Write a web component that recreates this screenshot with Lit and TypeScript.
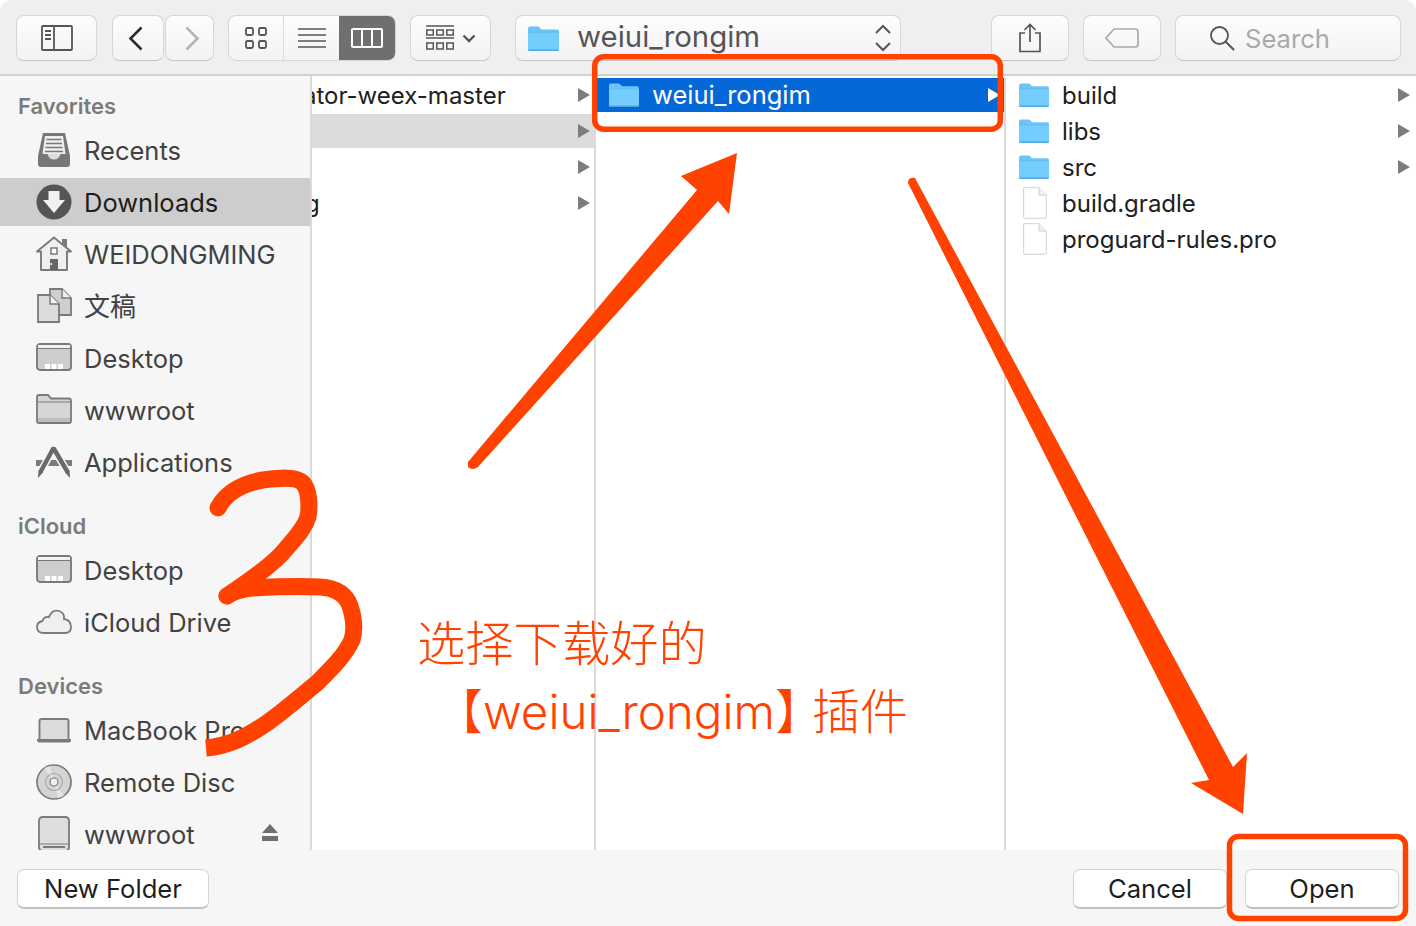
import { LitElement, html, css, svg } from "lit";
import { customElement } from "lit/decorators.js";

const folder = (cls = "") => html`<svg class="folder ${cls}" viewBox="0 0 30 24" width="30" height="24">
  <path d="M0 2.5Q0 .5 2 .5H9.5Q11 .5 12 2L13 3.2H28Q30 3.2 30 5V22Q30 24 28 24H2Q0 24 0 22Z" fill="#6cc5f8"/>
  <path d="M0 6.2H30V22Q30 24 28 24H2Q0 24 0 22Z" fill="#74cdfd"/>
  <path d="M0 22.6H30V22.8Q30 24 28 24H2Q0 24 0 22.8Z" fill="#4fa8de"/>
  <path d="M0 5.5H30V6.2H0Z" fill="#5fb6ea"/>
</svg>`;

const file = html`<svg viewBox="0 0 24 32" width="24" height="32" class="file">
  <path d="M.7.7H16L23.3 8V30Q23.3 31.3 22 31.3H2Q.7 31.3.7 30Z" fill="#fff" stroke="#d2d2d2"/>
  <path d="M16 .7V8H23.3" fill="#f1f1f1" stroke="#d2d2d2"/>
</svg>`;

const G = "#7a7a7a";
const iconParts: Record<string, unknown> = {
  recents: svg`<path d="M7 1H29L34 24V32Q34 35 31 35H5Q2 35 2 32V24Z" fill="#777"/>
    <path d="M9 4H27L29.500 22H6.500Z" fill="#eee"/>
    <path d="M10.500 7.500H25.500M10 11.500H26M9.500 15.500H26.500M9 19.500H27" stroke="#777" stroke-width="1.700"/>
    <path d="M11.500 22Q13 27.500 18 27.500Q23 27.500 24.500 22Z" fill="#dcdcdc"/>`,
  downloads: svg`<circle cx="18" cy="18" r="17.500" fill="#555"/><path d="M12.500 7H23.500V16H29L18 29L7 16H12.500Z" fill="#f1f1f1"/>`,
  home: svg`<path d="M18 1.500L35 15.500H31V34H5V15.500H1Z" fill="#efefef" stroke="${G}" stroke-width="1.900" stroke-linejoin="round"/>
    <path d="M26 3H31V12L26 7Z" fill="${G}"/><rect x="15" y="12" width="6" height="6" fill="#fff" stroke="${G}" stroke-width="1.500"/><rect x="14" y="23" width="8" height="11" fill="#666"/><rect x="14.500" y="27" width="1.500" height="2" fill="#fff"/>`,
  docs: svg`<path d="M14 1H26L35 10V27H14Z" fill="#cfcfcf" stroke="${G}" stroke-width="1.800"/><path d="M26 1V10H35" fill="#eee" stroke="${G}" stroke-width="1.500"/>
    <path d="M2 7H14L23 16V34H2Z" fill="#dcdcdc" stroke="${G}" stroke-width="1.800"/><path d="M14 7V16H23" fill="#f2f2f2" stroke="${G}" stroke-width="1.500"/>`,
  desktop: svg`<g transform="translate(0 2)"><rect x="1" y="2" width="34" height="26" rx="3" fill="#cdcdcd" stroke="${G}" stroke-width="1.900"/><rect x="2" y="3" width="32" height="3" fill="#f1f1f1"/>
    <path d="M2 6.500H34" stroke="${G}" stroke-width="1"/><rect x="9" y="22" width="5" height="5" fill="#fff"/><rect x="15.500" y="22" width="5" height="5" fill="#fff"/><rect x="22" y="22" width="5" height="5" fill="#fff"/></g>`,
  folderg: svg`<g transform="translate(0 1)"><path d="M1 4Q1 2 3 2H12L15 5.500H33Q35 5.500 35 8V28Q35 30 33 30H3Q1 30 1 28Z" fill="#d6d6d6" stroke="${G}" stroke-width="1.800"/>
    <path d="M1.500 9H34.500" stroke="${G}" stroke-width="1.200"/><rect x="2" y="25" width="32" height="4" fill="#bdbdbd"/></g>`,
  apps: svg`<rect x="0" y="16" width="36" height="6" fill="#7a7a7a"/>
    <path d="M17 5L4 29M18 5L32 29" stroke="#f6f6f6" stroke-width="7.500" stroke-linecap="round" fill="none"/>
    <path d="M17 5L5 27M18 5L31 27" stroke="#6a6a6a" stroke-width="4.500" stroke-linecap="round" fill="none"/>
    <path d="M2 34L2.500 26L7 28.500Z M34 34L33.500 26L29 28.500Z" fill="#6a6a6a"/>`,
  cloud: svg`<g transform="translate(0 -2)"><path d="M8 31Q1 31 1 25Q1 20 6.500 19Q8 14 13 15Q16 7 23 9Q29 11 28 17Q35 18 35 25Q35 31 29 31Z" fill="#efefef" stroke="${G}" stroke-width="1.800"/></g>`,
  laptop: svg`<path d="M3.500 27V9Q3.500 7 6 7H30Q32.500 7 32.500 9V27" fill="#dcdcdc" stroke="${G}" stroke-width="1.900"/><path d="M1 27H35V28Q35 30.500 33 30.500H3Q1 30.500 1 28Z" fill="${G}"/>`,
  disc: svg`<circle cx="18" cy="18" r="17" fill="#d4d4d4" stroke="${G}" stroke-width="1.700"/><path d="M18 18L8 4L14 2Z M18 18L28 32L22 34Z" fill="#ececec" opacity=".7"/><circle cx="18" cy="18" r="8.500" fill="none" stroke="#a8a8a8" stroke-width="1.200"/><circle cx="18" cy="18" r="4" fill="#efefef" stroke="${G}" stroke-width="1.200"/>`,
  drive: svg`<path d="M3 31V5Q3 1 7 1H29Q33 1 33 5V31Q33 35 29 35H7Q3 35 3 31Z" fill="#dedede" stroke="${G}" stroke-width="1.800"/><path d="M3 28H33" stroke="${G}" stroke-width="1"/><path d="M7 31H29" stroke="${G}" stroke-width="2"/>`,
};
const icon = (n: string) => html`<svg class="side-icon" viewBox="0 0 36 36" width="36" height="36">${iconParts[n]}</svg>`;

const arrow = (white = false) => html`<svg class="arrow" viewBox="0 0 12 14" width="12" height="14"><path d="M0 0L12 7L0 14Z" fill=${white ? "#fff" : "#7d7d7d"}/></svg>`;

@customElement("app-root")
export class AppRoot extends LitElement {
  static styles = css`
    :host { display: block; width: 1416px; height: 926px; position: relative; overflow: hidden; background: #fff;
      font-family: Inter, "Liberation Sans", "Noto Sans CJK SC", sans-serif; font-size: 25.500px; color: #222; }
    .toolbar { background: #efefef; border-radius: 12px 12px 0 0; border-bottom: 2px solid #d2d2d2;
      display: flex; align-items: flex-start; padding: 15px 0 0 16px; box-sizing: border-box; height: 76px; }
    .btn { height: 46px; box-sizing: border-box; display: flex; align-items: center; justify-content: center; flex: none;
      background: linear-gradient(#fdfdfd, #f3f3f3); border: 1px solid #d6d6d6; border-bottom-color: #c4c4c4; border-radius: 8px; }
    .b-side { width: 81px; margin-right: 15px; }
    .b-back { width: 52px; margin-right: 1px; }
    .b-back svg { margin-right: 5px; }
    .b-fwd { width: 49px; margin-right: 14px; }
    .b-fwd svg { margin-left: 5px; }
    .seg { width: 168px; display: flex; margin-right: 14px; height: 46px; border-radius: 8px; overflow: hidden; border: 1px solid #d6d6d6; box-sizing: border-box; background: linear-gradient(#fdfdfd, #f3f3f3); }
    .seg > div { display: flex; align-items: center; justify-content: center; }
    .seg .s1 { width: 56px; border-right: 1px solid #dcdcdc; box-sizing: border-box; }
    .seg .s2 { width: 55px; }
    .seg .s3 { width: 57px; background: #6f6f6f; }
    .b-arr { width: 81px; margin-right: 24px; gap: 8px; }
    .b-path { width: 386px; margin-right: 90px; justify-content: flex-start; padding-left: 12px; color: #555; font-size: 29.400px; position: relative; }
    .b-path .folder { width: 31px; height: 25px; margin-right: 18px; }
    .b-path span { margin-bottom: 3px; }
    .b-path .step { position: absolute; left: 358px; top: 8px; }
    .b-share { width: 78px; margin-right: 14px; }
    .b-tag { width: 78px; margin-right: 14px; }
    .b-search { width: 226px; justify-content: flex-start; padding-left: 33px; gap: 10px; color: #a9a9a9; font-size: 25.600px; }

    .body { display: flex; height: 774px; }
    .sidebar { width: 312px; flex: none; box-sizing: border-box; background: #f6f6f6; border-right: 2px solid #dadada; padding-top: 14px; overflow: hidden; color: #424242; }
    .section { margin-bottom: 24px; display: flex; flex-direction: column; gap: 4px; }
    .label { height: 32px; line-height: 32px; padding-left: 18px; font-size: 22px; font-weight: 600; color: #7b7b7b; }
    .row { height: 48px; box-sizing: border-box; padding-left: 36px; display: flex; align-items: center; gap: 12px; flex: none; white-space: nowrap; position: relative; }
    .row.sel { background: #cdcdcd; color: #1d1d1d; }
    .row.han span { margin-bottom: 3px; font-size: 26px; }
    .eject { position: absolute; left: 262px; top: 14px; }

    .cols { flex: 1; display: flex; border-top: 1px solid transparent; min-width: 0; }
    .col { box-sizing: border-box; overflow: hidden; border-right: 2px solid #dadada; flex: none; }
    .c1 { width: 284px; } .c2 { width: 410px; } .c3 { width: 410px; border-right: 0; }
    .item { height: 34px; margin: 1px 0 2px; display: flex; align-items: center; white-space: nowrap; position: relative; color: #202020; font-size: 24px; }
    .item .folder, .item .file { position: absolute; left: 13px; }
    .item .file { left: 17px; }
    .item .name { margin-left: 56px; }
    .item .arrow { position: absolute; right: 6px; }
    .c1 .arrow, .c2 .arrow { right: 4px; }
    .item.sel { background: #0568d8; color: #fff; font-size: 25.500px; }
    .item.sel .name { margin-bottom: 2px; }
    .item.gray { background: #dcdcdc; }
    .c1 .name { margin-left: -9px; }
    .c1 .g { margin-left: -7px; }

    .footer { height: 76px; background: #f6f6f6; display: flex; align-items: flex-start; padding: 19px 17px 0 17px; box-sizing: border-box; font-size: 25.600px; }
    .fbtn { height: 40px; box-sizing: border-box; display: flex; align-items: center; justify-content: center; background: #fff; border: 1px solid #d4d4d4; border-bottom: 2px solid #c2c2c2; border-radius: 7px; color: #1e1e1e; }
    .f-new { width: 192px; margin-right: auto; }
    .f-cancel { width: 154px; margin-right: 18px; }
    .f-open { width: 154px; }

    .overlay { position: absolute; left: 0; top: 0; pointer-events: none; }
    .note { position: absolute; color: #ff4200; font-size: 48.300px; line-height: 60px; white-space: nowrap; font-weight: 300;
      font-family: "Noto Sans CJK SC", "Liberation Sans", sans-serif; }
    .n1 { left: 417px; top: 610px; }
    .n2 { left: 435px; top: 678px; font-size: 48px; }
    .n2 .latin { font-family: Inter, "Liberation Sans", sans-serif; font-size: 47.500px; font-weight: 300; }
    .n2 .close { letter-spacing: -11px; }
  `;

  private side(n: string, t: string, sel = false, extra: unknown = null, han = false) {
    return html`<div class="row ${sel ? "sel" : ""} ${han ? "han" : ""}">${icon(n)}<span>${t}</span>${extra}</div>`;
  }

  render() {
    return html`
      <div class="toolbar">
        <div class="btn b-side"><svg width="32" height="26" viewBox="0 0 32 26"><rect x="1" y="1" width="30" height="24" fill="none" stroke="#555" stroke-width="1.800" rx="1"/><path d="M13 1V25" stroke="#555" stroke-width="1.800"/><path d="M4 6H10M4 10H10M4 14H10" stroke="#555" stroke-width="1.800"/></svg></div>
        <div class="btn b-back"><svg width="15" height="25" viewBox="0 0 15 25"><path d="M13.500 1.500L2.500 12.500L13.500 23.500" fill="none" stroke="#2a2a2a" stroke-width="2.600"/></svg></div>
        <div class="btn b-fwd"><svg width="15" height="25" viewBox="0 0 15 25"><path d="M1.500 1.500L12.500 12.500L1.500 23.500" fill="none" stroke="#b4b4b4" stroke-width="2.600"/></svg></div>
        <div class="seg">
          <div class="s1"><svg width="22" height="22" viewBox="0 0 22 22"><g fill="none" stroke="#555" stroke-width="1.800"><rect x="1" y="1" width="7" height="7" rx="1.500"/><rect x="14" y="1" width="7" height="7" rx="1.500"/><rect x="1" y="14" width="7" height="7" rx="1.500"/><rect x="14" y="14" width="7" height="7" rx="1.500"/></g></svg></div>
          <div class="s2"><svg width="30" height="22" viewBox="0 0 30 22"><path d="M1 2H29M1 8H29M1 14H29M1 20H29" stroke="#555" stroke-width="1.600"/></svg></div>
          <div class="s3"><svg width="32" height="20" viewBox="0 0 32 20"><rect x="1" y="1" width="30" height="18" fill="none" stroke="#fff" stroke-width="2" rx="1"/><path d="M11 1V19M21 1V19" stroke="#fff" stroke-width="2"/></svg></div>
        </div>
        <div class="btn b-arr"><svg width="28" height="26" viewBox="0 0 28 26"><path d="M0 1H28M0 13H28" stroke="#555" stroke-width="1.600"/><g fill="none" stroke="#555" stroke-width="1.500"><rect x=".8" y="5" width="6.500" height="5"/><rect x="10.800" y="5" width="6.500" height="5"/><rect x="20.800" y="5" width="6.500" height="5"/><rect x=".8" y="18" width="6.500" height="6"/><rect x="10.800" y="18" width="6.500" height="6"/><rect x="20.800" y="18" width="6.500" height="6"/></g></svg><svg width="14" height="9" viewBox="0 0 14 9"><path d="M1.500 1.500L7 7L12.500 1.500" fill="none" stroke="#555" stroke-width="2.400"/></svg></div>
        <div class="btn b-path">${folder()}<span>weiui_rongim</span><svg class="step" width="18" height="28" viewBox="0 0 18 28"><path d="M2 9L9 2L16 9M2 19L9 26L16 19" fill="none" stroke="#555" stroke-width="2"/></svg></div>
        <div class="btn b-share"><svg width="24" height="30" viewBox="0 0 24 30"><path d="M7 10H2V28.500H22V10H17M12 19V1.500M6.500 7L12 1.500L17.500 7" fill="none" stroke="#555" stroke-width="1.700"/></svg></div>
        <div class="btn b-tag"><svg width="34" height="20" viewBox="0 0 34 20"><path d="M9 1H30Q33 1 33 4V16Q33 19 30 19H9L1 10Z" fill="none" stroke="#aaa" stroke-width="1.700"/></svg></div>
        <div class="btn b-search"><svg width="26" height="26" viewBox="0 0 26 26"><circle cx="10.500" cy="10.500" r="8.500" fill="none" stroke="#555" stroke-width="1.800"/><path d="M16.500 16.500L25 25" stroke="#555" stroke-width="2"/></svg><span>Search</span></div>
      </div>

      <div class="body">
        <div class="sidebar">
          <div class="section">
            <div class="label">Favorites</div>
            ${this.side("recents", "Recents")}
            ${this.side("downloads", "Downloads", true)}
            ${this.side("home", "WEIDONGMING")}
            ${this.side("docs", "文稿", false, null, true)}
            ${this.side("desktop", "Desktop")}
            ${this.side("folderg", "wwwroot")}
            ${this.side("apps", "Applications")}
          </div>
          <div class="section">
            <div class="label">iCloud</div>
            ${this.side("desktop", "Desktop")}
            ${this.side("cloud", "iCloud Drive")}
          </div>
          <div class="section">
            <div class="label">Devices</div>
            ${this.side("laptop", "MacBook Pro")}
            ${this.side("disc", "Remote Disc")}
            ${this.side("drive", "wwwroot", false, html`<svg class="eject" width="16" height="17" viewBox="0 0 16 17"><path d="M8 0L16 9H0Z M0 12H16V17H0Z" fill="#6f6f6f"/></svg>`)}
          </div>
        </div>
        <div class="cols">
          <div class="col c1">
            <div class="item"><span class="name">ator-weex-master</span>${arrow()}</div>
            <div class="item gray">${arrow()}</div>
            <div class="item">${arrow()}</div>
            <div class="item"><span class="name g">g</span>${arrow()}</div>
          </div>
          <div class="col c2">
            <div class="item sel">${folder()}<span class="name">weiui_rongim</span>${arrow(true)}</div>
          </div>
          <div class="col c3">
            <div class="item">${folder()}<span class="name">build</span>${arrow()}</div>
            <div class="item">${folder()}<span class="name">libs</span>${arrow()}</div>
            <div class="item">${folder()}<span class="name">src</span>${arrow()}</div>
            <div class="item">${file}<span class="name">build.gradle</span></div>
            <div class="item">${file}<span class="name">proguard-rules.pro</span></div>
          </div>
        </div>
      </div>

      <div class="footer">
        <div class="fbtn f-new">New Folder</div>
        <div class="fbtn f-cancel">Cancel</div>
        <div class="fbtn f-open">Open</div>
      </div>

      <svg class="overlay" width="1416" height="926" viewBox="0 0 1416 926">
        <g fill="none" stroke="#ff4200">
          <rect x="594.700" y="56.700" width="405.600" height="72.600" rx="9" stroke-width="5.500"/>
          <rect x="1229.500" y="836.500" width="176" height="82" rx="9" stroke-width="5.500"/>
          <path d="M218 508C224 496 238 484 263 480C280 478 296 476 303 483C309 490 310 505 308 517C304 530 293 540 285 550C275 562 262 572 240 587L227 596C235 590 245 589 253 588C270 587 300 586 320 587C335 588 346 594 350 606C354 618 355 630 352 640C345 655 333 667 318 682C300 697 285 710 267 723C245 738 228 746 206 748" stroke-width="17" stroke-linejoin="round"/>
        </g>
        <circle cx="218" cy="508" r="8.500" fill="#ff4200"/>
        <circle cx="227" cy="596" r="8.500" fill="#ff4200"/>
        <path d="M468 462L697 190L681 176L737 153L729 214L718 201L478 467Q472 471 468 467Z" fill="#ff4200"/>
        <path d="M908 183Q908 177 915 178L1233 767L1247 753L1243 814L1191 783L1209 780Z" fill="#ff4200"/>
      </svg>
      <div class="note n1">选择下载好的</div>
      <div class="note n2">【<span class="latin">weiui_rongim</span><span class="close">】</span>插件</div>
    `;
  }
}
